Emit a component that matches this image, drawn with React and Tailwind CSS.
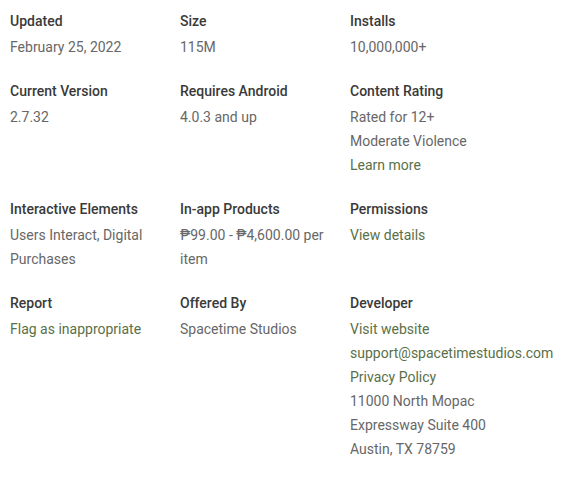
import React from "react";

const LINK = "text-[#5a7048]";

// each row of the "Additional information" grid
const rows = [
  [
    { label: "Updated", lines: [{ text: "February 25, 2022" }] },
    { label: "Size", lines: [{ text: "115M" }] },
    { label: "Installs", lines: [{ text: "10,000,000+" }] },
  ],
  [
    { label: "Current Version", lines: [{ text: "2.7.32" }] },
    { label: "Requires Android", lines: [{ text: "4.0.3 and up" }] },
    {
      label: "Content Rating",
      lines: [
        { text: "Rated for 12+" },
        { text: "Moderate Violence" },
        { text: "Learn more", link: true },
      ],
    },
  ],
  [
    {
      label: "Interactive Elements",
      lines: [{ text: "Users Interact, Digital Purchases" }],
    },
    {
      label: "In-app Products",
      lines: [{ text: "₱99.00 - ₱4,600.00 per item" }],
    },
    { label: "Permissions", lines: [{ text: "View details", link: true }] },
  ],
  [
    {
      label: "Report",
      lines: [{ text: "Flag as inappropriate", link: true }],
    },
    { label: "Offered By", lines: [{ text: "Spacetime Studios" }] },
    {
      label: "Developer",
      lines: [
        { text: "Visit website", link: true },
        { text: "support@spacetimestudios.com", link: true },
        { text: "Privacy Policy", link: true },
        { text: "11000 North Mopac Expressway Suite 400" },
        { text: "Austin, TX 78759" },
      ],
    },
  ],
];

function InfoCell({ label, lines }) {
  return (
    <div className="w-[170px] pr-[10px]">
      <div className="text-[14px] leading-6 font-medium text-[#3a3a3a]">
        {label}
      </div>
      <div className="mt-[2px] text-[14px] leading-6">
        {lines.map((line, i) => (
          <div
            key={i}
            className={line.link ? LINK : "text-[#676767]"}
          >
            {line.text}
          </div>
        ))}
      </div>
    </div>
  );
}

export default function App() {
  return (
    <div
      className="w-[570px] h-[495px] bg-white px-[10px] pt-[9px]"
      style={{ fontFamily: "Roboto, 'Noto Sans', 'DejaVu Sans', sans-serif" }}
    >
      <div className="flex flex-col gap-5">
        {rows.map((row, r) => (
          <div key={r} className="flex">
            {row.map((cell) => (
              <InfoCell key={cell.label} {...cell} />
            ))}
          </div>
        ))}
      </div>
    </div>
  );
}
